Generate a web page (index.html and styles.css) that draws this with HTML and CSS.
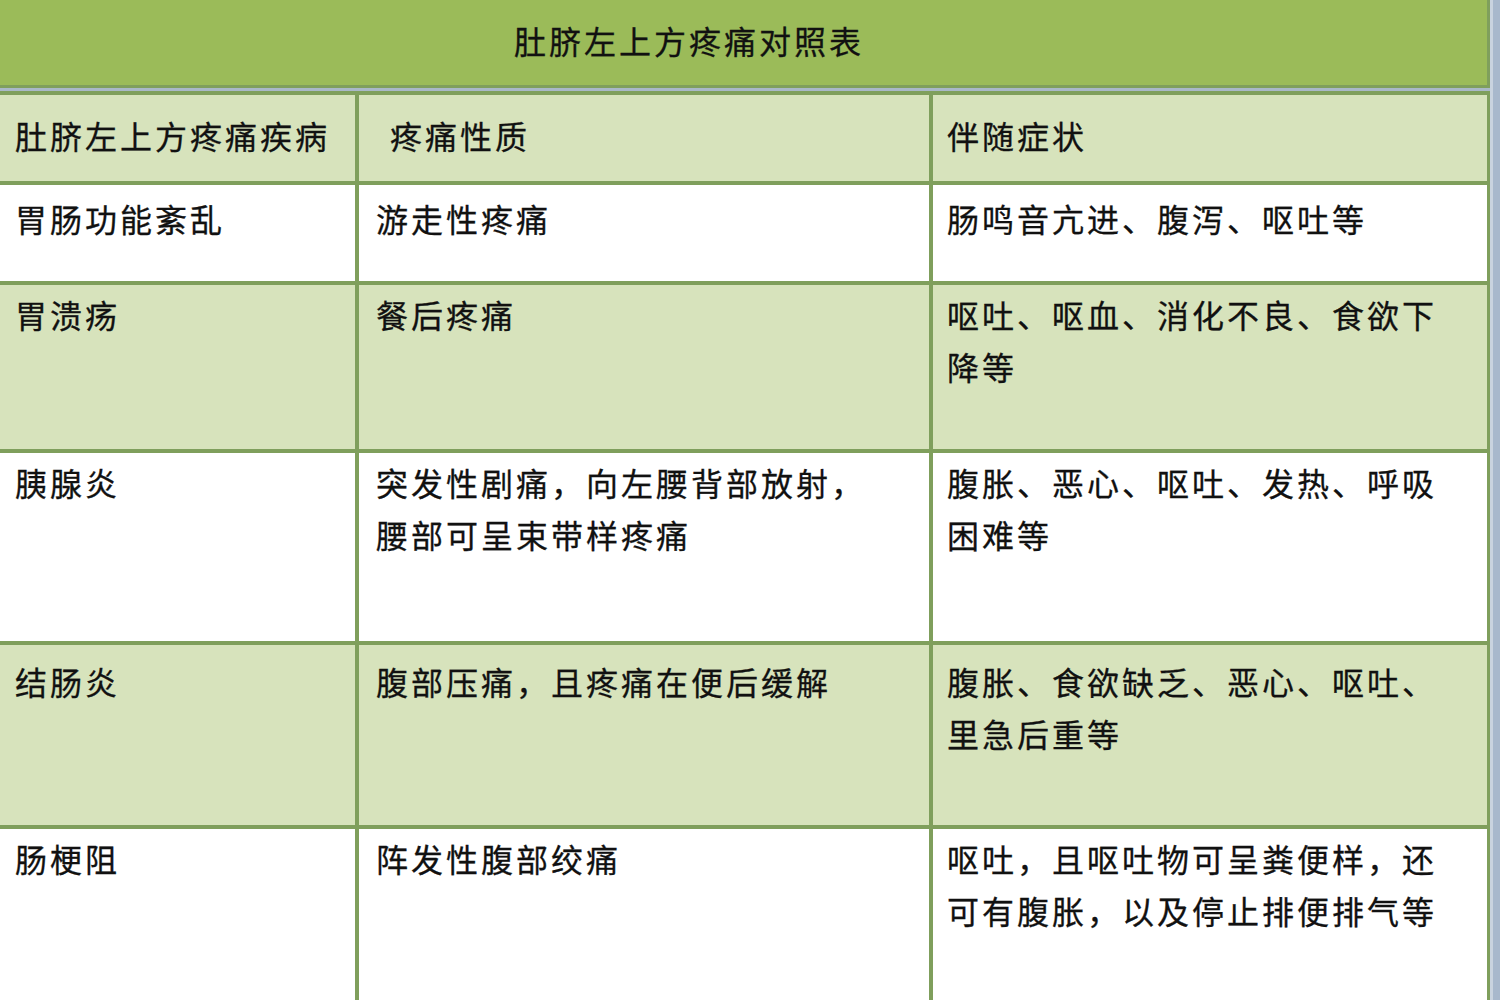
FILE: index.html
```html
<!DOCTYPE html>
<html lang="zh-CN">
<head>
<meta charset="utf-8">
<title>肚脐左上方疼痛对照表</title>
<link rel="stylesheet" href="styles.css">
</head>
<body>
<div class="sheet">
  <div class="title">肚脐左上方疼痛对照表</div>
  <div class="sep"></div>
  <div class="grid">
    <div class="cell head c1">肚脐左上方疼痛疾病</div>
    <div class="cell head c2h">疼痛性质</div>
    <div class="cell head c3">伴随症状</div>

    <div class="cell r1 c1">胃肠功能紊乱</div>
    <div class="cell r1 c2">游走性疼痛</div>
    <div class="cell r1 c3">肠鸣音亢进、腹泻、呕吐等</div>

    <div class="cell alt r2 c1">胃溃疡</div>
    <div class="cell alt r2 c2">餐后疼痛</div>
    <div class="cell alt r2 c3">呕吐、呕血、消化不良、食欲下降等</div>

    <div class="cell r3 c1">胰腺炎</div>
    <div class="cell r3 c2">突发性剧痛，向左腰背部放射，腰部可呈束带样疼痛</div>
    <div class="cell r3 c3">腹胀、恶心、呕吐、发热、呼吸困难等</div>

    <div class="cell alt r4 c1">结肠炎</div>
    <div class="cell alt r4 c2">腹部压痛，且疼痛在便后缓解</div>
    <div class="cell alt r4 c3">腹胀、食欲缺乏、恶心、呕吐、里急后重等</div>

    <div class="cell r5 c1">肠梗阻</div>
    <div class="cell r5 c2">阵发性腹部绞痛</div>
    <div class="cell r5 c3">呕吐，且呕吐物可呈粪便样，还可有腹胀，以及停止排便排气等</div>
  </div>
</div>
</body>
</html>
```

FILE: styles.css
```css
html, body {
  margin: 0;
  padding: 0;
}
body {
  background: #a8b8cc;
  width: 1500px;
  height: 1000px;
  overflow: hidden;
  font-family: "Noto Sans CJK SC", "Noto Sans", sans-serif;
  color: #111;
}
.sheet {
  width: 1490px;
  border-right: 3px solid #c9d3df;
  background: #ffffff;
}
.title {
  box-sizing: border-box;
  height: 88px;
  background: #9bbb59;
  border-right: 3px solid #7f9f5c;
  border-bottom: 3px solid #7f9f5c;
  padding: 14px 0 0 514px;
  font-size: 32px;
  letter-spacing: 3px;
  line-height: 52px;
}
.sep {
  height: 3px;
  background: #a9b8c8;
}
.grid {
  display: grid;
  grid-template-columns: 355px 570px 554px;
  grid-template-rows: 86px 96px 164px 188px 180px 200px;
  gap: 4px;
  padding: 4px 3px 0 0;
  background: #7f9f5c;
}
.cell {
  background: #ffffff;
  font-size: 32px;
  letter-spacing: 3px;
  line-height: 52px;
  padding-top: 3px;
  -webkit-text-stroke: 0.3px #111;
}
.title {
  -webkit-text-stroke: 0.3px #111;
}
.cell.alt,
.cell.head {
  background: #d7e3bc;
}
.cell.head {
  padding-top: 14px;
}
.c1 {
  padding-left: 15px;
  padding-right: 10px;
}
.c2 {
  padding-left: 17px;
  padding-right: 40px;
}
.c2h {
  padding-left: 31px;
  padding-right: 40px;
}
.c3 {
  padding-left: 14px;
  padding-right: 40px;
}
.cell.r1 {
  padding-top: 7px;
}
.cell.r4 {
  padding-top: 10px;
}
```
